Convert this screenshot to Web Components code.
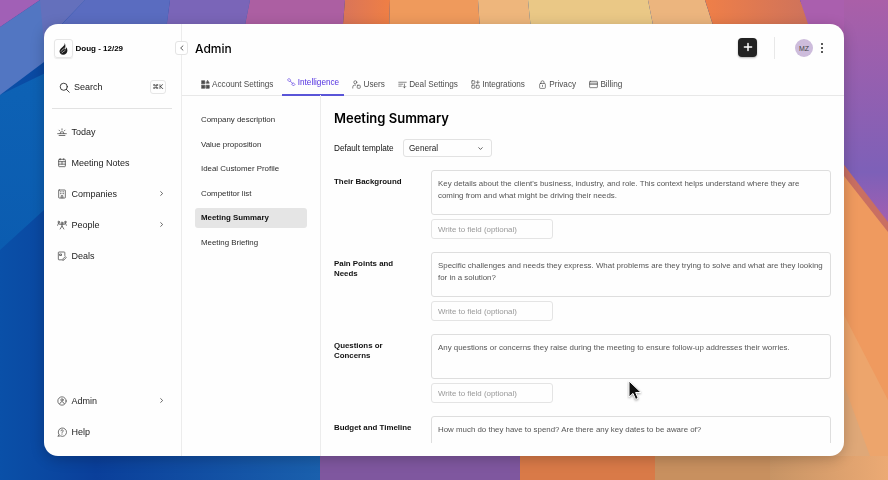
<!DOCTYPE html>
<html lang="en">
<head>
<meta charset="utf-8">
<title>Admin - Meeting Summary</title>
<style>
    html, body { margin: 0; height: 100%; }
    body {
        width: 888px;
        height: 480px;
        overflow: hidden;
        font-family: "Liberation Sans", Inter, sans-serif;
        color: #222;
    }
</style>
</head>
<body>
<desktop-screen>
    <app-window>
        <side-bar slot="side"></side-bar>
        <top-bar slot="top" title="Admin"></top-bar>
        <tab-bar slot="top"></tab-bar>
        <sub-nav slot="sub">
            <sub-item>Company description</sub-item>
            <sub-item>Value proposition</sub-item>
            <sub-item>Ideal Customer Profile</sub-item>
            <sub-item>Competitor list</sub-item>
            <sub-item active>Meeting Summary</sub-item>
            <sub-item>Meeting Briefing</sub-item>
        </sub-nav>
        <summary-form slot="content">
            <field-row label="Their Background">Key details about the client's business, industry, and role. This context helps understand where they are coming from and what might be driving their needs.</field-row>
            <field-row label="Pain Points and Needs">Specific challenges and needs they express. What problems are they trying to solve and what are they looking for in a solution?</field-row>
            <field-row label="Questions or Concerns">Any questions or concerns they raise during the meeting to ensure follow-up addresses their worries.</field-row>
            <field-row label="Budget and Timeline" last>How much do they have to spend? Are there any key dates to be aware of?</field-row>
        </summary-form>
    </app-window>
    <mouse-pointer slot="over"></mouse-pointer>
</desktop-screen>

<script>
const ICONS = {
    search: '<circle cx="5.2" cy="5.2" r="3.9"/><path d="M8 8l3.2 3.2"/>',
    today: '<path d="M.8 8h10.4M2.5 10.2h7M3.6 8a2.4 2.4 0 0 1 4.8 0M6 2.2v1.4M2.4 3.8l1 1M9.6 3.8l-1 1"/>',
    notes: '<rect x="2" y="1.6" width="8" height="8.8" rx=".8"/><path d="M2 4.4h8M2 7.4h8M6 4.4v3M4 .8v1.4M8 .8v1.4"/>',
    companies: '<rect x="2" y="1.2" width="8" height="9.6" rx=".6"/><path d="M4 3.4h1M7 3.4h1M4 5.6h1M7 5.6h1M5 10.8V8h2v2.8"/>',
    people: '<circle cx="6" cy="3.6" r="1.2"/><path d="M6 4.8v2.4M3.8 10.8L6 7.2l2.2 3.6M4 5l2 1 2-1"/><circle cx="2" cy="2.4" r=".9"/><circle cx="10" cy="2.4" r=".9"/><path d="M.8 6.4L2 3.4l1.2 2M11.2 6.4L10 3.4l-1.2 2"/>',
    deals: '<path d="M6 10.6H2.4a.8.8 0 0 1-.8-.8V2a.8.8 0 0 1 .8-.8h6.2a.8.8 0 0 1 .8.8v3.4"/><path d="M3.6 3.6h1.8v1.8H3.6zM7 10.8l.3-1.5 2.6-2.6 1.2 1.2-2.6 2.6z"/>',
    admin: '<circle cx="6" cy="6" r="5"/><circle cx="6" cy="4.7" r="1.4"/><path d="M3.5 9c.4-1.4 1.3-2 2.5-2s2.1.6 2.5 2"/>',
    help: '<path d="M2.4 9.2A5 5 0 1 1 4.2 10.7L1.4 11z"/><path d="M4.8 4.6a1.3 1.3 0 1 1 1.9 1.2c-.5.3-.7.5-.7 1.1M6 8.4v.3"/>',
    chevronRight: '<path d="M4.6 2.8L8 6l-3.4 3.2"/>',
    chevronLeft: '<path d="M7.4 2.8L4 6l3.4 3.2"/>',
    chevronDown: '<path d="M3 4.6L6 7.6l3-3"/>',
    account: '<path fill="currentColor" d="M1 1h4v4H1zM1 7h4v4H1zM7 7h4v4H7z"/><path fill="currentColor" d="M9 .8l2 3.4H7z"/>',
    intelligence: '<path d="M3 .9l2 2-2 2-2-2zM8.6 6.6l2 2-2 2-2-2zM4.6 4.4l2.4 2.4"/>',
    users: '<circle cx="4.4" cy="3" r="2"/><path d="M1 10.8V9.4A2.6 2.6 0 0 1 3.6 6.8h1.2"/><rect x="7" y="7" width="4" height="4" rx=".8"/>',
    deal: '<path d="M1 3h10M1 5.6h5.4M1 8.2h3.4M8.6 5.4v5M6.8 8.6l1.8 1.8 1.8-1.8"/>',
    integrations: '<rect x="1" y="1" width="4" height="4" rx=".6"/><rect x="1" y="7" width="4" height="4" rx=".6"/><rect x="7" y="7" width="4" height="4" rx=".6"/><path d="M9 1v4M7 3h4"/>',
    privacy: '<rect x="2.2" y="4.6" width="7.6" height="6.6" rx="1"/><path d="M4 4.6V3a2 2 0 0 1 4 0v1.6M6 7v1.6"/>',
    billing: '<rect x=".8" y="1.8" width="10.4" height="8.4" rx=".8"/><path d="M.8 4.2h10.4M.8 5.8h10.4"/>',
    plus: '<path d="M6 2.4v7.2M2.4 6h7.2"/>'
};

class UiIcon extends HTMLElement {
    connectedCallback() {
        const size = this.getAttribute('size') || 10;
        const width = this.getAttribute('stroke') || 1;
        this.attachShadow({ mode: 'open' });
        this.shadowRoot.innerHTML = `
            <style>
                :host { display: inline-flex; flex: none; width: ${size}px; height: ${size}px; }
                svg { width: 100%; height: 100%; fill: none; stroke: currentColor; stroke-width: ${width};
                      stroke-linecap: round; stroke-linejoin: round; }
            </style>
            <svg viewBox="0 0 12 12">${ICONS[this.getAttribute('name')]}</svg>
        `;
    }
}

class DesktopScreen extends HTMLElement {
    constructor() {
        super();
        this.attachShadow({ mode: 'open' });
        this.shadowRoot.innerHTML = `
            <style>
                :host { display: block; position: relative; width: 888px; height: 480px; overflow: hidden; background: #0a45a0; }
                .wall { position: absolute; left: 0; top: 0; width: 888px; height: 480px; }
                .stage { position: relative; box-sizing: border-box; width: 888px; height: 480px; padding: 24px 44px; }
            </style>
            <svg class="wall" viewBox="0 0 888 480" preserveAspectRatio="none">
                <defs>
                    <linearGradient id="lblue" x1="0" y1="0" x2="0" y2="1"><stop offset="0" stop-color="#0f66b8"/><stop offset="1" stop-color="#0b5cb0"/></linearGradient>
                    <linearGradient id="ldeep" x1="0" y1="0" x2="1" y2="0"><stop offset="0" stop-color="#0a50a8"/><stop offset=".3" stop-color="#0a3f9a"/><stop offset="1" stop-color="#1a60ad"/></linearGradient>
                    <linearGradient id="rpur" x1="0" y1="0" x2="0" y2="1"><stop offset="0" stop-color="#aa5fa8"/><stop offset=".75" stop-color="#7d60b8"/><stop offset="1" stop-color="#a85fb0"/></linearGradient>
                    <linearGradient id="redo" x1="0" y1="0" x2="1" y2="0"><stop offset="0" stop-color="#d8745a"/><stop offset="1" stop-color="#ef7f45"/></linearGradient>
                    <linearGradient id="redo2" x1="0" y1="0" x2="1" y2="0"><stop offset="0" stop-color="#ef7f48"/><stop offset="1" stop-color="#c8705f"/></linearGradient>
                    <linearGradient id="tan" x1="0" y1="0" x2="1" y2="0"><stop offset="0" stop-color="#c79465"/><stop offset="1" stop-color="#ecaa74"/></linearGradient>
                </defs>
                <rect width="320" height="480" fill="url(#ldeep)"/>
                <polygon points="0,95 320,-60 320,200 44,210 0,250" fill="url(#lblue)"/>
                <polygon points="0,27 40,0 85,0 60,24 44,62 0,95" fill="#5276c2"/>
                <polygon points="0,0 40,0 0,27" fill="#a160b6"/>
                <polygon points="40,0 85,0 62,24 44,44" fill="#6470bc"/>
                <polygon points="85,0 170,0 162,60 60,60 62,24" fill="#5a6cc0"/>
                <polygon points="170,0 250,0 238,60 162,60" fill="#7a65b8"/>
                <polygon points="250,0 345,0 340,60 238,60" fill="#ac5fa2"/>
                <polygon points="345,0 390,0 388,60 340,60" fill="url(#redo)"/>
                <polygon points="390,0 478,0 482,60 388,60" fill="#ef9a5c"/>
                <polygon points="478,0 528,0 534,60 482,60" fill="#eeb67c"/>
                <polygon points="528,0 648,0 660,60 534,60" fill="#eac886"/>
                <polygon points="648,0 705,0 724,60 660,60" fill="#ecb57e"/>
                <polygon points="705,0 800,0 828,60 724,60" fill="url(#redo2)"/>
                <polygon points="800,0 888,0 888,60 820,60" fill="#aa5fae"/>
                <polygon points="844,0 888,0 888,230 844,165" fill="url(#rpur)"/>
                <polygon points="820,140 844,165 888,230 888,480 820,480" fill="#ef9a5f"/>
                <polygon points="844,165 888,222 888,232 844,176" fill="#c96f62"/>
                <polygon points="844,315 888,400 888,480 844,480" fill="#eda56c"/>
                <polygon points="820,385 844,385 870,456 880,480 820,480" fill="#dfa878"/>
                <rect x="320" y="430" width="200" height="50" fill="#7f579f"/>
                <rect x="520" y="430" width="135" height="50" fill="#d97a48"/>
                <rect x="655" y="430" width="115" height="50" fill="#c8905f"/>
                <rect x="770" y="456" width="118" height="24" fill="url(#tan)"/>
                <rect x="770" y="430" width="60" height="26" fill="#c79465"/>
            </svg>
            <div class="stage"><slot></slot></div>
            <slot name="over"></slot>
        `;
    }
}

class AppWindow extends HTMLElement {
    constructor() {
        super();
        this.attachShadow({ mode: 'open' });
        this.shadowRoot.innerHTML = `
            <style>
                :host {
                    display: grid;
                    grid-template-columns: 138px 139px 1fr;
                    grid-template-rows: 71px 1fr;
                    width: 800px;
                    height: 432px;
                    background: #fefefe;
                    border-radius: 14px;
                    overflow: hidden;
                    box-shadow: 0 3px 14px rgba(0,0,0,0.22);
                    filter: blur(0.25px);
                }
                .side { grid-row: 1 / 3; display: flex; border-right: 1px solid #ececec; }
                .top { grid-column: 2 / 4; display: flex; flex-direction: column; }
                .sub { display: flex; border-right: 1px solid #ececec; }
                .content { display: flex; min-height: 0; padding-bottom: 13px; }
            </style>
            <div class="side"><slot name="side"></slot></div>
            <div class="top"><slot name="top"></slot></div>
            <div class="sub"><slot name="sub"></slot></div>
            <div class="content"><slot name="content"></slot></div>
        `;
    }
}

class NavItem extends HTMLElement {
    connectedCallback() {
        const more = this.hasAttribute('more');
        this.attachShadow({ mode: 'open' });
        this.shadowRoot.innerHTML = `
            <style>
                :host { display: flex; align-items: center; height: 31px; padding: 0 16px 0 13px; font-size: 9px; color: #1c1c1c; }
                .icon { display: inline-flex; width: 14.5px; color: #444; }
                .label { flex: 1; }
                .more { display: inline-flex; color: #555; }
            </style>
            <span class="icon"><ui-icon name="${this.getAttribute('icon')}" size="10" stroke="0.9"></ui-icon></span>
            <span class="label"><slot></slot></span>
            ${more ? '<span class="more"><ui-icon name="chevronRight" size="7" stroke="1.5"></ui-icon></span>' : ''}
        `;
    }
}

class SideBar extends HTMLElement {
    constructor() {
        super();
        this.attachShadow({ mode: 'open' });
        this.shadowRoot.innerHTML = `
            <style>
                :host { display: flex; flex-direction: column; flex: 1; min-width: 0; padding-bottom: 9px; }
                .brand { display: flex; align-items: center; gap: 2.5px; padding: 15px 0 0 10px; font-size: 8px; font-weight: 700; color: #000; }
                .logo { display: flex; align-items: center; justify-content: center; width: 17px; height: 17px;
                        border: 1px solid #e6e6e6; border-radius: 3px; box-shadow: 0 1px 1px rgba(0,0,0,.08); }
                .search { display: flex; align-items: center; gap: 4px; margin: 21px 15px 0 15px; height: 16px; font-size: 9px; color: #1c1c1c; }
                .search span { flex: 1; }
                kbd { display: flex; align-items: center; justify-content: center; width: 14px; height: 12px; border: 1px solid #e6e6e6;
                      border-radius: 3px; font: 6.5px "DejaVu Sans", sans-serif; color: #333; }
                hr { margin: 13px 9px 7px 8px; border: 0; border-top: 1px solid #e2e2e2; }
                .grow { flex: 1; }
            </style>
            <div class="brand">
                <span class="logo">
                    <svg width="11" height="13" viewBox="0 0 11 13"><path fill="#1c1c1c" d="M6.6.4c.5 2-.4 3-1.8 4.3C3.4 6 1.6 7.2 1.5 9.3c0 1.9 1.5 3.4 3.6 3.4 2.5 0 4.3-1.8 4.3-4.3 0-1.2-.4-2.3-1.1-3.1-.1 1.1-.7 2-1.6 2.5 1-2.4.9-5.2-.1-7.4z"/><path fill="none" stroke="#fff" stroke-width=".6" d="M3 9.6c1-2 2.6-2.6 4.4-4M3.7 11.2c1.1-1.500 2.500-2 3.700-3"/></svg>
                </span>
                Doug - 12/29
            </div>
            <div class="search"><ui-icon name="search" size="11" stroke="0.9"></ui-icon><span>Search</span><kbd>⌘K</kbd></div>
            <hr>
            <nav-item icon="today">Today</nav-item>
            <nav-item icon="notes">Meeting Notes</nav-item>
            <nav-item icon="companies" more>Companies</nav-item>
            <nav-item icon="people" more>People</nav-item>
            <nav-item icon="deals">Deals</nav-item>
            <div class="grow"></div>
            <nav-item icon="admin" more>Admin</nav-item>
            <nav-item icon="help">Help</nav-item>
        `;
    }
}

class TopBar extends HTMLElement {
    connectedCallback() {
        this.attachShadow({ mode: 'open' });
        this.shadowRoot.innerHTML = `
            <style>
                :host { display: flex; align-items: center; height: 48px; flex: none; position: relative; padding-right: 21px; }
                .collapse { position: absolute; left: -7px; top: 17px; display: flex; align-items: center; justify-content: center;
                            box-sizing: border-box; width: 13px; height: 14px; background: #fff; border: 1px solid #e4e4e4; border-radius: 3px; color: #444; }
                h1 { flex: 1; margin: 0 0 0 13px; font-size: 12px; font-weight: 500; color: #000; font-family: Inter, sans-serif; }
                .add { display: flex; align-items: center; justify-content: center; width: 19px; height: 19px; background: #222; border-radius: 4px;
                       color: #fff; box-shadow: 0 1px 2px rgba(0,0,0,.3); margin-top: -2px; }
                .rule { width: 1px; height: 22px; margin: 0 20px 0 17px; background: #e8e8e8; }
                .avatar { display: flex; align-items: center; justify-content: center; width: 18px; height: 18px; border-radius: 50%;
                          background: #cdbcdc; font-size: 7px; color: #444; }
                .dots { display: flex; flex-direction: column; gap: 1.7px; margin-left: 8px; }
                .dots i { width: 2px; height: 2px; border-radius: 50%; background: #222; }
            </style>
            <span class="collapse"><ui-icon name="chevronLeft" size="8" stroke="1.3"></ui-icon></span>
            <h1>${this.getAttribute('title')}</h1>
            <span class="add"><ui-icon name="plus" size="12" stroke="1.5"></ui-icon></span>
            <span class="rule"></span>
            <span class="avatar">MZ</span>
            <span class="dots"><i></i><i></i><i></i></span>
        `;
    }
}

class TabBar extends HTMLElement {
    constructor() {
        super();
        this.attachShadow({ mode: 'open' });
        const tabs = [
            ['account', 'Account Settings'],
            ['intelligence', 'Intelligence'],
            ['users', 'Users'],
            ['deal', 'Deal Settings'],
            ['integrations', 'Integrations'],
            ['privacy', 'Privacy'],
            ['billing', 'Billing']
        ];
        this.shadowRoot.innerHTML = `
            <style>
                :host { display: flex; height: 24px; box-sizing: border-box; padding-left: 14px; border-bottom: 1px solid #e8e8e8; font-size: 8.2px; color: #4c4c4c; }
                a { display: flex; align-items: center; gap: 2px; height: 24px; padding: 0 5px; margin-right: 3.3px; box-sizing: border-box; white-space: nowrap; }
                a.on { color: #5230e0; border-bottom: 2px solid #5a55d8; padding-bottom: 1px; }
            </style>
            ${tabs.map(([icon, label]) => `
                <a class="${label === 'Intelligence' ? 'on' : ''}"><ui-icon name="${icon}" size="9" stroke="0.9"></ui-icon>${label}</a>
            `).join('')}
        `;
    }
}

class SubNav extends HTMLElement {
    constructor() {
        super();
        this.attachShadow({ mode: 'open' });
        this.shadowRoot.innerHTML = `
            <style>
                :host { display: flex; flex-direction: column; flex: 1; min-width: 0; padding: 14.5px 13px 0 13px; gap: 4.5px; }
            </style>
            <slot></slot>
        `;
    }
}

class SubItem extends HTMLElement {
    constructor() {
        super();
        this.attachShadow({ mode: 'open' });
        this.shadowRoot.innerHTML = `
            <style>
                :host { display: flex; align-items: center; height: 20px; padding-left: 6px; border-radius: 3px; font-size: 7.9px; color: #2c2c2c; }
                :host([active]) { background: #e5e5e5; color: #111; font-weight: 700; }
            </style>
            <slot></slot>
        `;
    }
}

class SummaryForm extends HTMLElement {
    constructor() {
        super();
        this.attachShadow({ mode: 'open' });
        this.shadowRoot.innerHTML = `
            <style>
                :host { display: block; flex: 1; min-width: 0; overflow: hidden; padding: 15px 13px 0 13px; }
                h2 { margin: 0; font-size: 13px; line-height: 16px; font-weight: 600; color: #000; font-family: Inter, sans-serif; }
                .tmpl { display: flex; align-items: center; height: 18px; margin: 13px 0 13px; font-size: 8.2px; color: #111; }
                .tmpl > span { width: 69px; }
                .select { display: flex; align-items: center; justify-content: space-between; box-sizing: border-box; width: 89px; height: 18px;
                          padding: 0 7px 0 5px; border: 1px solid #e2e2e2; border-radius: 3px; color: #222; }
                .rows { display: flex; flex-direction: column; gap: 13px; }
            </style>
            <h2>Meeting Summary</h2>
            <div class="tmpl"><span>Default template</span><div class="select">General<ui-icon name="chevronDown" size="7" stroke="1.2"></ui-icon></div></div>
            <div class="rows"><slot></slot></div>
        `;
    }
}

class FieldRow extends HTMLElement {
    connectedCallback() {
        const last = this.hasAttribute('last');
        this.attachShadow({ mode: 'open' });
        this.shadowRoot.innerHTML = `
            <style>
                :host { display: grid; grid-template-columns: 97px 400px; grid-template-rows: 45px ${last ? '' : '20px'}; row-gap: 4px; font-size: 7.9px; }
                .label { grid-row: 1 / 3; box-sizing: border-box; width: 84px; padding-top: 7px; font-weight: 700; line-height: 10px; color: #111; }
                .text { box-sizing: border-box; padding: 7px 6px; border: 1px solid #dedede; border-radius: 3px; line-height: 12px; color: #555; }
                .write { display: flex; align-items: center; box-sizing: border-box; width: 122px; padding-left: 6px; border: 1px solid #e4e4e4;
                         border-radius: 3px; color: #999; }
            </style>
            <div class="label">${this.getAttribute('label')}</div>
            <div class="text"><slot></slot></div>
            ${last ? '' : '<div class="write">Write to field (optional)</div>'}
        `;
    }
}

class MousePointer extends HTMLElement {
    constructor() {
        super();
        this.attachShadow({ mode: 'open' });
        this.shadowRoot.innerHTML = `
            <style>
                :host { position: absolute; left: 627px; top: 379px; width: 16px; height: 24px; }
            </style>
            <svg width="16" height="24" viewBox="0 0 16 24">
                <path d="M2 2v16l4-3.6 2.6 6 2.600-1.100-2.600-5.800h5.400z" fill="#111" stroke="#fff" stroke-width="1" style="filter:drop-shadow(0 1px 1px rgba(0,0,0,.35))"/>
            </svg>
        `;
    }
}

customElements.define('ui-icon', UiIcon);
customElements.define('desktop-screen', DesktopScreen);
customElements.define('app-window', AppWindow);
customElements.define('nav-item', NavItem);
customElements.define('side-bar', SideBar);
customElements.define('top-bar', TopBar);
customElements.define('tab-bar', TabBar);
customElements.define('sub-nav', SubNav);
customElements.define('sub-item', SubItem);
customElements.define('summary-form', SummaryForm);
customElements.define('field-row', FieldRow);
customElements.define('mouse-pointer', MousePointer);
</script>
</body>
</html>
